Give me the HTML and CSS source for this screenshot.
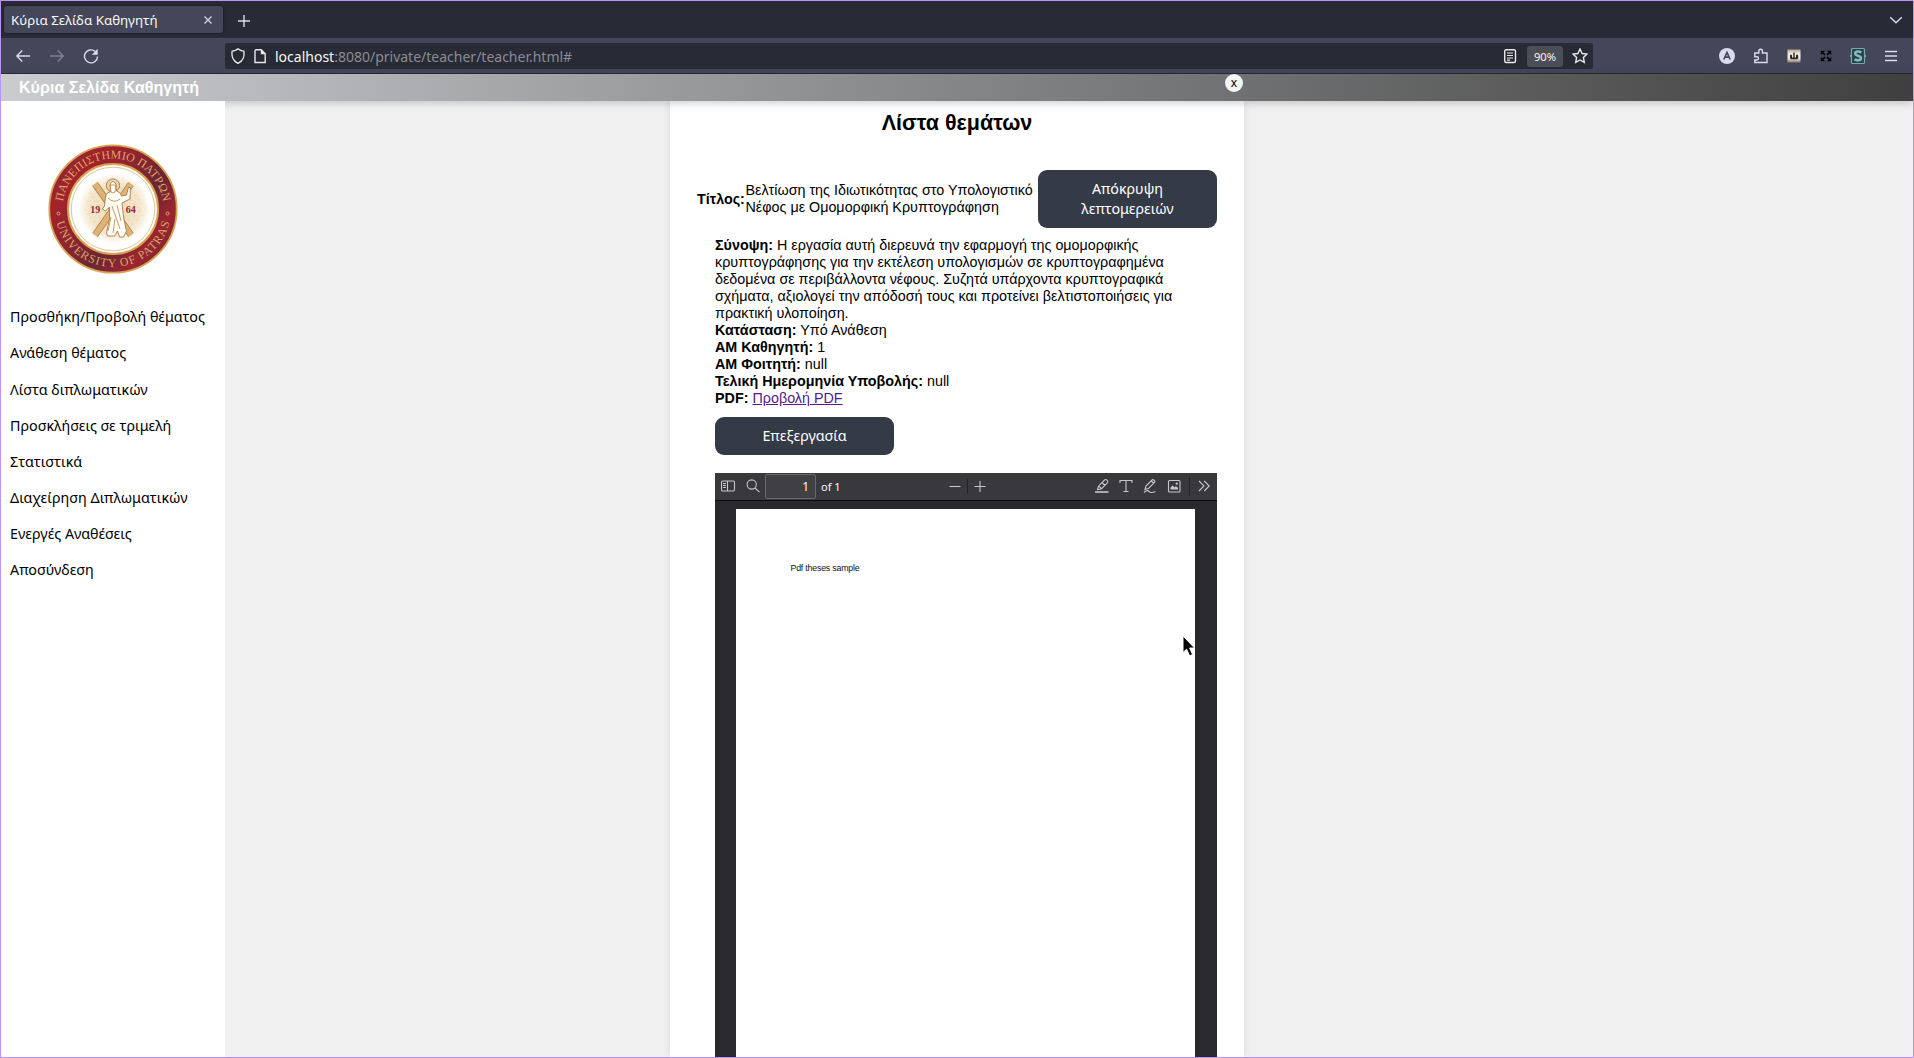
FILE: index.html
```html
<!DOCTYPE html>
<html lang="el">
<head>
<meta charset="utf-8">
<title>Κύρια Σελίδα Καθηγητή</title>
<link rel="stylesheet" href="styles.css">
</head>
<body>
<div class="window">
  <div class="tabbar">
    <div class="tab">
      <span>Κύρια Σελίδα Καθηγητή</span>
      <svg class="ico" width="16" height="16" viewBox="0 0 16 16"><path d="M4.500 4.500l7 7M11.500 4.500l-7 7"/></svg>
    </div>
    <svg class="ico new-tab" width="16" height="16" viewBox="0 0 16 16"><path d="M8 2v12M2 8h12"/></svg>
    <svg class="ico all-tabs" width="16" height="16" viewBox="0 0 16 16"><path d="M2.200 5.200L8 10.800l5.800-5.600"/></svg>
  </div>

  <div class="navbar">
    <div class="nav-buttons">
      <svg class="ico" width="16" height="16" viewBox="0 0 16 16"><path d="M15 8H1.800M7.300 2.500L1.800 8l5.500 5.500"/></svg>
      <svg class="ico dim" width="16" height="16" viewBox="0 0 16 16"><path d="M1 8h13.200M8.700 2.500L14.200 8l-5.500 5.500"/></svg>
      <svg class="ico" width="16" height="16" viewBox="0 0 16 16"><path d="M12.200 3.400A6.500 6.500 0 1 0 14.500 8.400"/><path class="solid" d="M14.700 .8v6H8.800z"/></svg>
    </div>
    <div class="urlbar">
      <svg class="ico lite" width="16" height="16" viewBox="0 0 16 16"><path d="M8 .8C6.600 2.200 4.300 3 2.200 3.100 1.300 7.800 3 13 8 15.300c5-2.300 6.700-7.500 5.800-12.200C11.700 3 9.400 2.200 8 .8z"/></svg>
      <svg class="ico lite" width="16" height="16" viewBox="0 0 16 16"><path d="M4 1.700h5.200l4 4V14.500H3V2.700z"/><path class="solid" d="M8.800 1.200v5h5z"/></svg>
      <div class="url"><b>localhost</b>:8080/private/teacher/teacher.html#</div>
      <svg class="ico lite" width="16" height="16" viewBox="0 0 16 16"><rect x="2.700" y="1.700" width="10.800" height="12.800" rx="1.500"/><path d="M5 5h6M5 7.500h6M5 10h6M5 12.200h3" stroke-width="1.200"/></svg>
      <span class="zoom">90%</span>
      <svg class="ico lite" width="16" height="16" viewBox="0 0 16 16"><path d="M8 1l2.100 4.500 4.900.6-3.600 3.400.9 4.900L8 12l-4.300 2.400.9-4.900L1 6.100l4.900-.6z"/></svg>
    </div>
    <div class="extensions">
      <svg class="account" width="16" height="16" viewBox="0 0 16 16"><circle cx="8" cy="8" r="8" fill="#d8dcec"/><path d="M4.800 11.500L8 4.500l3.200 7M6 9.200h4" fill="none" stroke="#44475a" stroke-width="1.700"/></svg>
      <svg class="ico addons" width="16" height="16" viewBox="0 0 16 16"><path d="M1.800 5h4V3a1.800 1.800 0 0 1 3.600 0v2h4.600v9.500H1.800V12h2a1.600 1.600 0 0 0 0-3.300H1.800z"/></svg>
      <svg width="16" height="16" viewBox="0 0 16 16"><defs><linearGradient id="fur" x2="0" y2="1"><stop offset="0" stop-color="#b5a396"/><stop offset=".3" stop-color="#efe6dd"/><stop offset=".65" stop-color="#f4eee8"/><stop offset="1" stop-color="#8d7b6e"/></linearGradient></defs><rect x="1.500" y="1.500" width="13" height="13" fill="url(#fur)"/><path d="M4 7.500q1-2 2 0v2l1.300 0V4.500h1.400v5H10v-2q1-2 2.200 0 .6 2.500-1 3.800H5Q3.500 10 4 7.500z" fill="#2d2723"/></svg>
      <svg class="expand" width="16" height="16" viewBox="0 0 16 16"><path d="M2.800 2.800h4.200L2.800 7zM13.200 2.800H9L13.200 7zM2.800 13.200H7L2.800 9zM13.200 13.200H9L13.200 9z" fill="#000"/><path d="M4 4l3 3M12 4L9 7M4 12l3-3M12 12L9 9" stroke="#000" stroke-width="1.500"/></svg>
      <svg width="18" height="18" viewBox="0 0 18 18"><rect x="2.500" y="1.500" width="13" height="15" rx="1" fill="#264249" stroke="#76a8ab" stroke-width="1.200"/><path d="M1 9h2M15 9h2" stroke="#76a8ab" stroke-width="2"/><path d="M12.300 5.600C10.500 4 6.200 4 6.200 6.600c0 2.700 5.700 1.800 5.700 4.600 0 2.700-4.400 2.600-6.300 1" fill="none" stroke="#8ab8b9" stroke-width="2.600"/></svg>
      <svg class="ico" width="16" height="16" viewBox="0 0 16 16"><path d="M2 3.500h12M2 8h12M2 12.500h12"/></svg>
    </div>
  </div>

  <div class="page">
    <header class="site-header">
      <h1>Κύρια Σελίδα Καθηγητή</h1>
      <button class="close">x</button>
    </header>
    <div class="content">
      <aside class="sidebar">
        <svg class="seal" width="132" height="132" viewBox="-66 -66 132 132">
          <defs>
            <linearGradient id="ring" x1="0" x2="1" y1=".1" y2=".9"><stop offset="0" stop-color="#7a2a35"/><stop offset=".2" stop-color="#a5222c"/><stop offset=".42" stop-color="#8d2431"/><stop offset=".62" stop-color="#6a2634"/><stop offset=".8" stop-color="#9b2530"/><stop offset="1" stop-color="#6d2a35"/></linearGradient>
            <radialGradient id="sand"><stop offset="0" stop-color="#ecd3a4"/><stop offset=".7" stop-color="#f1dfbe"/><stop offset="1" stop-color="#fff"/></radialGradient>
            <pattern id="hatch" width="7" height="5" patternUnits="userSpaceOnUse" patternTransform="rotate(-38)"><path d="M0 1h7M0 3.500h4" stroke="#fff" stroke-width=".9" opacity=".6"/></pattern>
            <path id="top-arc" d="M-50.500 0A50.500 50.500 0 0 1 50.500 0"/>
            <path id="bottom-arc" d="M-58 0A58 58 0 0 0 58 0"/>
          </defs>
          <circle r="63.700" fill="url(#ring)" stroke="#dba24f" stroke-width="1.800"/>
          <circle r="45" fill="#fff" stroke="#dba24f" stroke-width="2"/>
          <circle r="41.800" fill="none" stroke="#d7b27d" stroke-width=".8"/>
          <path d="M-26-28L-8-36 14-35 30-24 33-8 38 6 30 22 14 34-8 35-26 27-35 12-33-8z" fill="url(#sand)"/>
          <path d="M-26-28L-8-36 14-35 30-24 33-8 38 6 30 22 14 34-8 35-26 27-35 12-33-8z" fill="url(#hatch)"/>
          <path d="M-18-25L18 26M18-25L-18 26" stroke="#b5854c" stroke-width="6.800"/>
          <path d="M-18-25L18 26M18-25L-18 26" stroke="#dfb377" stroke-width="5.200"/>
          <circle cy="-23.500" r="6.600" fill="#f0d9ae" stroke="#a97b43"/>
          <path d="M-3-25q3-5 6 0l.5 7q4 1 5 5l5-1 2-8 2 1-.5 11-8 4 1.500 14 3 14-3 6-4 0-2-6-3 5-7 0-1-3 3-14 0-12-4 4-3-2 2-3 1-9q1-5 5-5z" fill="#fffdf6" stroke="#a97b43" stroke-width=".9"/>
          <path d="M-3-24h6l-1 7q-2 2-4 0zM-5-11q6 6 12 1M-1-3L7 20M4-4l4 16M-2 8l-3 14M2 10l-2 14" fill="none" stroke="#bd9159" stroke-width=".9"/>
          <g class="seal-year"><text x="-17.700" y="4">19</text><text x="17.700" y="4">64</text></g>
          <g class="seal-text"><text><textPath href="#top-arc" startOffset="50%" textLength="144">ΠΑΝΕΠΙΣΤΗΜΙΟ ΠΑΤΡΩΝ</textPath></text><text><textPath href="#bottom-arc" startOffset="50%" textLength="155">UNIVERSITY OF PATRAS</textPath></text></g>
          <g fill="none" stroke="#d9a866"><circle cx="-54.500" cy="4.500" r="1.500"/><circle cx="54.500" cy="4.500" r="1.500"/></g>
        </svg>
        <ul class="menu">
          <li>Προσθήκη/Προβολή θέματος</li>
          <li>Ανάθεση θέματος</li>
          <li>Λίστα διπλωματικών</li>
          <li>Προσκλήσεις σε τριμελή</li>
          <li>Στατιστικά</li>
          <li>Διαχείρηση Διπλωματικών</li>
          <li>Ενεργές Αναθέσεις</li>
          <li>Αποσύνδεση</li>
        </ul>
      </aside>
      <main class="main">
        <section class="card">
          <h2>Λίστα θεμάτων</h2>
          <div class="topic">
            <b>Τίτλος:</b>
            <span class="topic-title">Βελτίωση της Ιδιωτικότητας στο Υπολογιστικό Νέφος με Ομομορφική Κρυπτογράφηση</span>
            <button class="btn">Απόκρυψη λεπτομερειών</button>
          </div>
          <div class="details">
            <p><b>Σύνοψη:</b> Η εργασία αυτή διερευνά την εφαρμογή της ομομορφικής κρυπτογράφησης για την εκτέλεση υπολογισμών σε κρυπτογραφημένα δεδομένα σε περιβάλλοντα νέφους. Συζητά υπάρχοντα κρυπτογραφικά σχήματα, αξιολογεί την απόδοσή τους και προτείνει βελτιστοποιήσεις για πρακτική υλοποίηση.</p>
            <p><b>Κατάσταση:</b> Υπό Ανάθεση</p>
            <p><b>ΑΜ Καθηγητή:</b> 1</p>
            <p><b>ΑΜ Φοιτητή:</b> null</p>
            <p><b>Τελική Ημερομηνία Υποβολής:</b> null</p>
            <p><b>PDF:</b> <a href="#">Προβολή PDF</a></p>
            <button class="btn edit">Επεξεργασία</button>
            <div class="viewer">
              <div class="viewer-bar">
                <svg class="vico" width="16" height="16" viewBox="0 0 16 16"><rect x="1.500" y="3" width="13" height="10" rx="1.200"/><path d="M7.500 3v10M3 5.500h3M3 7.500h3M3 9.500h3"/></svg>
                <svg class="vico find" width="16" height="16" viewBox="0 0 16 16"><circle cx="6.700" cy="6.500" r="4.600"/><path d="M10 10l4.500 4.200"/></svg>
                <span class="page-no">1</span>
                <span class="page-count">of 1</span>
                <svg class="vico minus" width="16" height="16" viewBox="0 0 16 16"><path d="M2.500 8.500h11"/></svg>
                <i class="sep"></i>
                <svg class="vico plus" width="16" height="16" viewBox="0 0 16 16"><path d="M2.500 8.500h11M8 3v11"/></svg>
                <div class="tools">
                  <svg class="vico" width="16" height="16" viewBox="0 0 16 16"><path d="M3.500 11.500l1-3.300 6-6.200q1.300-1 2.600.2t.2 2.600l-6 6.200zM4.800 8.200l3 2.800M8 4.500l3 3"/><path d="M1 14h13.500" stroke-width="1.600"/></svg>
                  <svg class="vico" width="16" height="16" viewBox="0 0 16 16"><path d="M2 5V2.500h12V5M8 2.500v11M5.500 13.500h5"/></svg>
                  <svg class="vico" width="16" height="16" viewBox="0 0 16 16"><path d="M3 11.500l1-3.500 6-6q1-.8 2.200.3t.3 2.200l-6 6zM9.500 3l2 2M2 14.500q3-3 5-1t6.500 0"/></svg>
                  <svg class="vico" width="16" height="16" viewBox="0 0 16 16"><rect x="2.500" y="2.500" width="11.500" height="11.500" rx="1"/><path d="M4.500 11.500V9.500l2-2 2 1.800 1.500-1 2 1.500v1.700z" class="fill"/><circle cx="10.700" cy="5.700" r=".6"/></svg>
                  <i class="sep tall"></i>
                  <svg class="vico" width="16" height="16" viewBox="0 0 16 16"><path d="M3 3l5 5-5 5M8.200 3l5 5-5 5"/></svg>
                </div>
              </div>
              <div class="viewer-body"><div class="sheet">Pdf theses sample</div></div>
            </div>
          </div>
        </section>
      </main>
    </div>
  </div>
  <svg class="cursor" width="14" height="22" viewBox="0 0 14 22"><path d="M1 1v16.500l3.600-3.300 3 6.600 3-1.300-3-6.500h5z" fill="#000" stroke="#fff"/></svg>
</div>
</body>
</html>
```
FILE: styles.css
```css
* { box-sizing: border-box; }

body {
  margin: 0;
  font-family: "Liberation Sans", Arial, sans-serif;
  font-size: 14.33px;
  color: #000;
}

.window {
  display: flex;
  flex-direction: column;
  width: 100vw;
  height: 100vh;
  overflow: hidden;
  border: 1px solid #bd93f9;
  position: relative;
}

svg { display: block; flex: none; }

.ico { fill: none; stroke: #d8dcec; stroke-width: 1.4; }
.ico .solid { fill: #d8dcec; stroke: none; }
.ico.lite { stroke: #e8e8e6; }
.ico.lite .solid { fill: #e8e8e6; }
.ico.dim { opacity: .4; }

/* Browser chrome */
.tabbar {
  flex: none;
  height: 37px;
  display: flex;
  align-items: center;
  padding: 0 9px 0 3px;
  background: #282a36;
}

.tab {
  display: flex;
  align-items: center;
  justify-content: space-between;
  width: 219px;
  height: 27px;
  padding: 0 7px 0 7px;
  border-radius: 3px;
  background: #44475a;
  box-shadow: 0 0 3px rgba(0, 0, 0, .5);
  color: #f8f8f2;
  font: 13.33px "Noto Sans", sans-serif;
}
.tab .ico { stroke-width: 1.1; }

.new-tab { margin: 2px 0 0 13px; }
.all-tabs { margin-left: auto; }

.navbar {
  flex: none;
  height: 36px;
  display: flex;
  align-items: center;
  padding-top: 1px;
  background: #44475a;
  border-bottom: 1px solid #282a36;
}

.nav-buttons {
  display: flex;
  gap: 18px;
  width: 224px;
  padding-left: 14px;
}

.urlbar {
  display: flex;
  align-items: center;
  width: 1368px;
  height: 26px;
  padding: 0 5px;
  border-radius: 3px;
  background: #282a36;
  font: 14px "Noto Sans", sans-serif;
  color: #8b8c93;
}
.urlbar .ico + .ico { margin-left: 6px; }
.url { flex: 1; margin-left: 7px; }
.url b { font-weight: 400; color: #f8f8f2; }

.zoom {
  width: 36px;
  height: 21px;
  margin: 0 9px;
  border-radius: 3px;
  background: #4b4d57;
  color: #f8f8f2;
  font-size: 11.2px;
  line-height: 21px;
  text-align: center;
}

.extensions {
  display: flex;
  align-items: center;
  gap: 16px;
  padding-left: 126px;
}
.account { margin-right: 2px; }
.addons { margin-right: 1px; }
.expand { margin-right: -1px; }

/* Page */
.page {
  flex: 1;
  min-height: 0;
  display: flex;
  flex-direction: column;
  background: #f1f1f1;
}

.site-header {
  flex: none;
  display: flex;
  align-items: center;
  height: 27px;
  padding-left: 18px;
  background: linear-gradient(90deg, #cacccf, #3f3f3f);
  box-shadow: 0 2px 8px rgba(0, 0, 0, .2);
  z-index: 1;
}

.site-header h1 {
  width: 1206px;
  margin: 0;
  font-size: 16.1px;
  line-height: 27px;
  color: #fff;
}

.close {
  width: 18px;
  height: 18px;
  padding: 0;
  border: 0;
  border-radius: 50%;
  margin-bottom: 9px;
  background: #f5f5f5;
  font: 12px/16px "Noto Sans", sans-serif;
}

.content { flex: 1; min-height: 0; display: flex; }

.sidebar {
  flex: none;
  width: 224px;
  padding-top: 42px;
  background: #fff;
  z-index: 2;
}

.seal { margin-left: 45.5px; }
.seal text { text-anchor: middle; font-family: "Liberation Serif", serif; }
.seal-year { font-size: 10px; font-weight: 700; fill: #9e2430; }
.seal-text { font-size: 11.8px; fill: #d9a866; }

.menu {
  margin: 0;
  padding: 24.2px 0 0 9px;
  list-style: none;
  font: 14.3px/36.15px "Noto Sans", sans-serif;
}

.main { flex: 1; display: flex; overflow: hidden; }

.card {
  width: 574px;
  margin-left: 445px;
  padding: 0 27px;
  background: #fff;
  box-shadow: 0 0 8px rgba(0, 0, 0, .1);
}

.card h2 {
  margin: 0 0 34px;
  padding-top: 10px;
  font-size: 21.5px;
  line-height: 25px;
  text-align: center;
}

.topic {
  display: flex;
  align-items: center;
  line-height: 17px;
}
.topic b { flex: none; width: 48.5px; }
.topic-title { flex: 1; }

.btn {
  width: 179px;
  padding: 9px 18px;
  border: 0;
  border-radius: 9px;
  background: #343a46;
  color: #fff;
  font: 14.3px/20px "Noto Sans", sans-serif;
}
.btn.edit { display: block; margin: 10px 0 18px; }

.details { padding: 9px 0 0 18px; line-height: 17px; }
.details p { margin: 0; }
.details a { color: #551a8b; }

.viewer { height: 640px; background: #2a2a2e; }

.viewer-bar {
  display: flex;
  align-items: center;
  height: 28px;
  padding: 0 5px 1px;
  background: #38383d;
  border-bottom: 1px solid #0c0c0d;
  color: #f9f9fa;
  font: 11px "Noto Sans", sans-serif;
}

.vico { fill: none; stroke: #c7c7c9; stroke-width: 1.1; }
.vico .fill { fill: #c7c7c9; stroke: none; }
.find { margin-left: 9px; }

.page-no {
  width: 51px;
  height: 25px;
  margin-left: 4px;
  padding-right: 6px;
  border: 1px solid #68686d;
  border-radius: 2px;
  background: #404044;
  font-size: 12px;
  line-height: 23px;
  text-align: right;
}
.page-count { width: 131px; padding-left: 5px; }
.sep { width: 1px; height: 15px; background: #232327; }
.sep.tall { height: 19px; }
.minus { margin-right: 4px; }
.plus { margin-left: 4px; }
.tools { margin-left: auto; display: flex; align-items: center; gap: 8px; }
.tools .sep { margin: 0 -1.5px; }

.viewer-body { padding: 8px 22px 0 21px; }
.sheet {
  height: 600px;
  padding: 53px 0 0 54.5px;
  background: #fff;
  font-size: 8.8px;
  letter-spacing: -.2px;
  line-height: 12px;
  color: #111;
}

.cursor { position: absolute; left: 1181px; top: 634px; z-index: 3; }
```
